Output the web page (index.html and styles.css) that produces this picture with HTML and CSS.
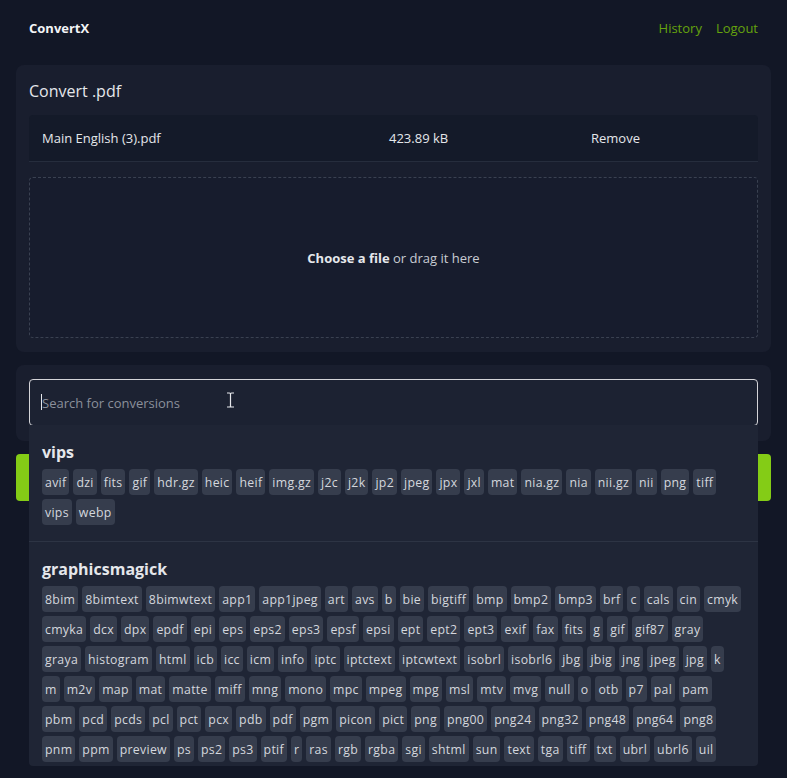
FILE: index.html
```html
<!DOCTYPE html>
<html lang="en">
<head>
    <meta charset="UTF-8">
    <meta name="viewport" content="width=device-width, initial-scale=1.0">
    <title>ConvertX</title>
    <link rel="stylesheet" href="styles.css">
</head>
<body>
    <div class="page">
        <header class="topbar">
            <a class="brand" href="#">ConvertX</a>
            <nav class="nav">
                <a href="#">History</a>
                <a href="#">Logout</a>
            </nav>
        </header>

        <section class="card">
            <h1>Convert .pdf</h1>
            <div class="file-row">
                <span>Main English (3).pdf</span>
                <span>423.89 kB</span>
                <span>Remove</span>
            </div>
            <div class="dropzone">
                <p><b>Choose a file</b> or drag it here</p>
            </div>
        </section>

        <form class="convert-form" onsubmit="return false">
            <section class="card search-card">
                <div class="search-wrap">
                    <input type="search" class="search" placeholder="Search for conversions">
                    <span class="caret"></span>
                    <svg class="ibeam" width="9" height="16" viewBox="0 0 9 16">
                        <path d="M1 1h2.5q1 0 1 1v12q0 1 1 1H8M8 1H5.5q-1 0-1 1M1 15h2.5q1 0 1-1" fill="none" stroke="#e5e7eb" stroke-width="1.2"/>
                    </svg>
                    <div class="results" id="results">
                        <!-- converter sections are inserted here by JavaScript -->
                    </div>
                </div>
            </section>
            <button type="submit" class="btn-convert">Convert</button>
        </form>
    </div>

    <script>
        const converters = {
            vips: 'avif dzi fits gif hdr.gz heic heif img.gz j2c j2k jp2 jpeg jpx jxl mat nia.gz nia nii.gz nii png tiff vips webp',
            graphicsmagick: '8bim 8bimtext 8bimwtext app1 app1jpeg art avs b bie bigtiff bmp bmp2 bmp3 brf c cals cin cmyk ' +
                'cmyka dcx dpx epdf epi eps eps2 eps3 epsf epsi ept ept2 ept3 exif fax fits g gif gif87 gray ' +
                'graya histogram html icb icc icm info iptc iptctext iptcwtext isobrl isobrl6 jbg jbig jng jpeg jpg k ' +
                'm m2v map mat matte miff mng mono mpc mpeg mpg msl mtv mvg null o otb p7 pal pam ' +
                'pbm pcd pcds pcl pct pcx pdb pdf pgm picon pict png png00 png24 png32 png48 png64 png8 ' +
                'pnm ppm preview ps ps2 ps3 ptif r ras rgb rgba sgi shtml sun text tga tiff txt ubrl ubrl6 uil ' +
                'uyvy vicar vid viff wbmp webp wmf wpg x xbm xc xcf xpm xv xwd yuv'
        };

        const results = document.getElementById('results');

        Object.keys(converters).forEach(name => {
            const group = document.createElement('div');
            group.className = 'group';
            const tags = converters[name].split(' ')
                .map(t => `<button type="button" class="tag">${t}</button>`)
                .join('');
            group.innerHTML = `<h2>${name}</h2><div class="tags">${tags}</div>`;
            results.appendChild(group);
        });
    </script>
</body>
</html>
```

FILE: styles.css
```css
* {
    box-sizing: border-box;
}
html, body {
    min-height: 100vh;
}
body {
    margin: 0;
    background-color: #121726;
    color: #e5e7eb;
    font-family: "Open Sans", "Noto Sans", sans-serif;
    font-size: 13px;
}
a {
    text-decoration: none;
}
.page {
    min-height: 100vh;
    padding: 0 16px;
}
.topbar {
    display: flex;
    justify-content: space-between;
    align-items: center;
    height: 56px;
    padding: 0 13px;
    margin-bottom: 9px;
}
.brand {
    color: #f3f4f6;
    font-weight: 700;
    font-size: 13px;
}
.nav {
    display: flex;
    gap: 14px;
}
.nav a {
    color: #65a30d;
    font-size: 13px;
}
.card {
    background-color: #191e2e;
    border-radius: 8px;
    padding: 13px 13px 14px;
}
.card h1 {
    margin: 0 0 11px 0;
    font-size: 16px;
    font-weight: 400;
    line-height: 26px;
}
.file-row {
    display: grid;
    grid-template-columns: 347px 202px 1fr;
    align-items: center;
    height: 47px;
    padding: 0 13px;
    background-color: #141a29;
    border-bottom: 1px solid #262d3d;
    border-radius: 4px 4px 0 0;
}
.dropzone {
    display: flex;
    align-items: center;
    justify-content: center;
    height: 161px;
    margin-top: 15px;
    border: 1px dashed #3a4151;
    border-radius: 4px;
    background-color: #171c2d;
    color: #c9ccd3;
}
.dropzone b {
    color: #e5e7eb;
}
.search-card {
    margin-top: 13px;
    padding: 14px 13px 15px;
}
.search-wrap {
    position: relative;
}
.search {
    display: block;
    width: 100%;
    height: 47px;
    padding: 0 12px;
    background-color: #1c2232;
    border: 1px solid #d4d4d8;
    border-radius: 4px;
    color: #e5e7eb;
    font-family: inherit;
    font-size: 13px;
    outline: none;
}
.search::placeholder {
    color: #8b909b;
}
.caret {
    position: absolute;
    left: 12px;
    top: 15px;
    width: 1px;
    height: 16px;
    background-color: #e5e7eb;
}
.ibeam {
    position: absolute;
    left: 197px;
    top: 13px;
}
.results {
    position: absolute;
    top: 46px;
    left: 0;
    right: 0;
    height: 341px;
    overflow: hidden;
    background-color: #1f2535;
    border-radius: 0 0 4px 4px;
    z-index: 2;
}
.group {
    padding: 14px 15px 16px 13px;
    border-bottom: 1px solid #2d3444;
}
.group h2 {
    margin: 0 0 4px 0;
    font-size: 16px;
    font-weight: 700;
    line-height: 26px;
    color: #e5e7eb;
}
.tags {
    display: flex;
    flex-wrap: wrap;
    gap: 4px;
}
.tag {
    height: 26px;
    padding: 0 3px;
    background-color: #363d4d;
    border: none;
    border-radius: 4px;
    color: #d4d7dd;
    font-family: inherit;
    font-size: 12.3px;
    letter-spacing: 0.3px;
}
.btn-convert {
    display: block;
    width: 100%;
    height: 47px;
    margin-top: 13px;
    background-color: #84cc16;
    border: none;
    border-radius: 4px;
    color: #111827;
    font-family: inherit;
    font-size: 16px;
}
```
